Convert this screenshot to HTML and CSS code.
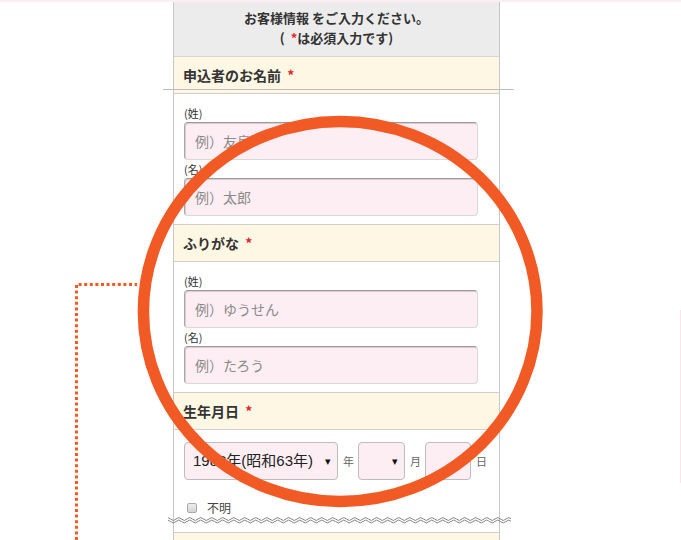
FILE: index.html
```html
<!DOCTYPE html>
<html lang="ja">
<head>
    <meta charset="UTF-8">
    <title>お客様情報入力</title>
    <link rel="stylesheet" href="styles.css">
</head>
<body>
    <div class="strip"></div>

    <div class="form">
        <div class="form-head">お客様情報 をご入力ください。<br>( <span class="req">*</span>は必須入力です)</div>

        <div class="sec-title">申込者のお名前 <span class="req">*</span></div>
        <div class="sec-body">
            <div class="lbl">(姓)</div>
            <input class="txt" type="text" placeholder="例）友泉">
            <div class="lbl">(名)</div>
            <input class="txt" type="text" placeholder="例）太郎">
        </div>

        <div class="sec-title">ふりがな <span class="req">*</span></div>
        <div class="sec-body">
            <div class="lbl">(姓)</div>
            <input class="txt" type="text" placeholder="例）ゆうせん">
            <div class="lbl">(名)</div>
            <input class="txt" type="text" placeholder="例）たろう">
        </div>

        <div class="sec-title">生年月日 <span class="req">*</span></div>
        <div class="sec-body birth">
            <div class="date-row">
                <div class="sel sel-year">1988年(昭和63年)</div>
                <span class="unit">年</span>
                <div class="sel sel-month"></div>
                <span class="unit">月</span>
                <div class="day"></div>
                <span class="unit">日</span>
            </div>
            <div class="unknown"><span class="chk"></span>不明</div>
        </div>

        <div class="sec-title"></div>
    </div>

    <!-- callout drawn over the form -->
    <svg class="overlay" width="681" height="540" viewBox="0 0 681 540">
        <defs>
            <pattern id="wave" x="0" y="515" width="11" height="9" patternUnits="userSpaceOnUse">
                <path d="M0 4 Q2.75 1 5.5 4 T11 4" fill="none" stroke="#777" stroke-width="0.9"/>
                <path d="M0 6.5 Q2.75 3.5 5.5 6.5 T11 6.5" fill="none" stroke="#777" stroke-width="0.9"/>
            </pattern>
        </defs>
        <line x1="163" y1="89.5" x2="514" y2="89.5" stroke="#bdbdbd" stroke-width="1"/>
        <rect x="168" y="515" width="343" height="9" fill="url(#wave)"/>
        <line x1="680.5" y1="310" x2="680.5" y2="483" stroke="#fde3ea" stroke-width="1"/>
        <path d="M76.5 540 V284.5 H137" fill="none" stroke="#f15a24" stroke-width="3" stroke-dasharray="3 2.6"/>
        <ellipse cx="340.2" cy="311.5" rx="196.8" ry="190" fill="none" stroke="#f15a24" stroke-width="11.5"/>
    </svg>
</body>
</html>
```

FILE: styles.css
```css
body {
    margin: 0;
    width: 681px;
    height: 540px;
    overflow: hidden;
    position: relative;
    background: #fff;
    font-family: "Noto Sans CJK JP", "Noto Sans", sans-serif;
    color: #333;
}
.strip {
    height: 2px;
    background: #fdeef2;
}
.form {
    margin-left: 173px;
    width: 327px;
    box-sizing: border-box;
    border-left: 1px solid #c8c8c8;
    border-right: 1px solid #c8c8c8;
}
.form-head {
    height: 55px;
    box-sizing: border-box;
    padding-top: 6px;
    background: #ececec;
    border-bottom: 1px solid #d6d6d6;
    text-align: center;
    font-size: 13px;
    font-weight: bold;
    line-height: 20px;
}
.req {
    color: #e2242c;
    margin-left: 3px;
}
.sec-title {
    height: 37px;
    box-sizing: border-box;
    padding-left: 9px;
    background: #fdf7e3;
    border-bottom: 1px solid #cfcfcf;
    font-size: 14px;
    font-weight: bold;
    line-height: 36px;
}
.sec-body {
    padding: 10px 21px 8px 10px;
    border-bottom: 1px solid #cfcfcf;
}
.lbl {
    font-size: 11px;
    line-height: 18px;
    color: #333;
}
.txt {
    display: block;
    width: 100%;
    height: 38px;
    box-sizing: border-box;
    margin: 0;
    padding: 0 10px;
    background: #fdeef3;
    border: 1px solid #d8d8d8;
    border-top-color: #9a9a9a;
    border-left-color: #a8a8a8;
    border-radius: 4px;
    box-shadow: inset 1px 1px 1px rgba(0, 0, 0, 0.15);
    font-family: inherit;
    font-size: 14px;
    outline: none;
}
.txt::placeholder {
    color: #8a8a8a;
}
.birth {
    height: 103px;
    box-sizing: border-box;
    padding-top: 12px;
}
.date-row {
    display: flex;
    align-items: center;
}
.sel, .day {
    flex-shrink: 0;
    height: 38px;
    box-sizing: border-box;
    background: #fdeef3;
    border: 1px solid #bdbdbd;
    border-radius: 4px;
}
.sel {
    position: relative;
    padding-left: 8px;
    font-family: "Liberation Sans", "Noto Sans CJK JP", sans-serif;
    font-size: 15px;
    line-height: 36px;
    color: #222;
}
.sel::after {
    content: "▾";
    position: absolute;
    right: 6px;
    top: 0;
    font-size: 11px;
    color: #111;
}
.sel-year {
    width: 154px;
}
.sel-month {
    width: 47px;
}
.day {
    width: 46px;
}
.unit {
    flex-shrink: 0;
    margin: 0 4px 0 5px;
    font-size: 11px;
    color: #666;
}
.unknown {
    display: flex;
    align-items: center;
    margin-top: 20px;
    padding-left: 3px;
    font-size: 12px;
    line-height: 16px;
    color: #444;
}
.chk {
    width: 8px;
    height: 8px;
    margin-right: 10px;
    border: 1px solid #aaa;
    border-radius: 2px;
    background: linear-gradient(#eee, #d4d4d4);
}
.overlay {
    position: absolute;
    left: 0;
    top: 0;
    pointer-events: none;
}
```
